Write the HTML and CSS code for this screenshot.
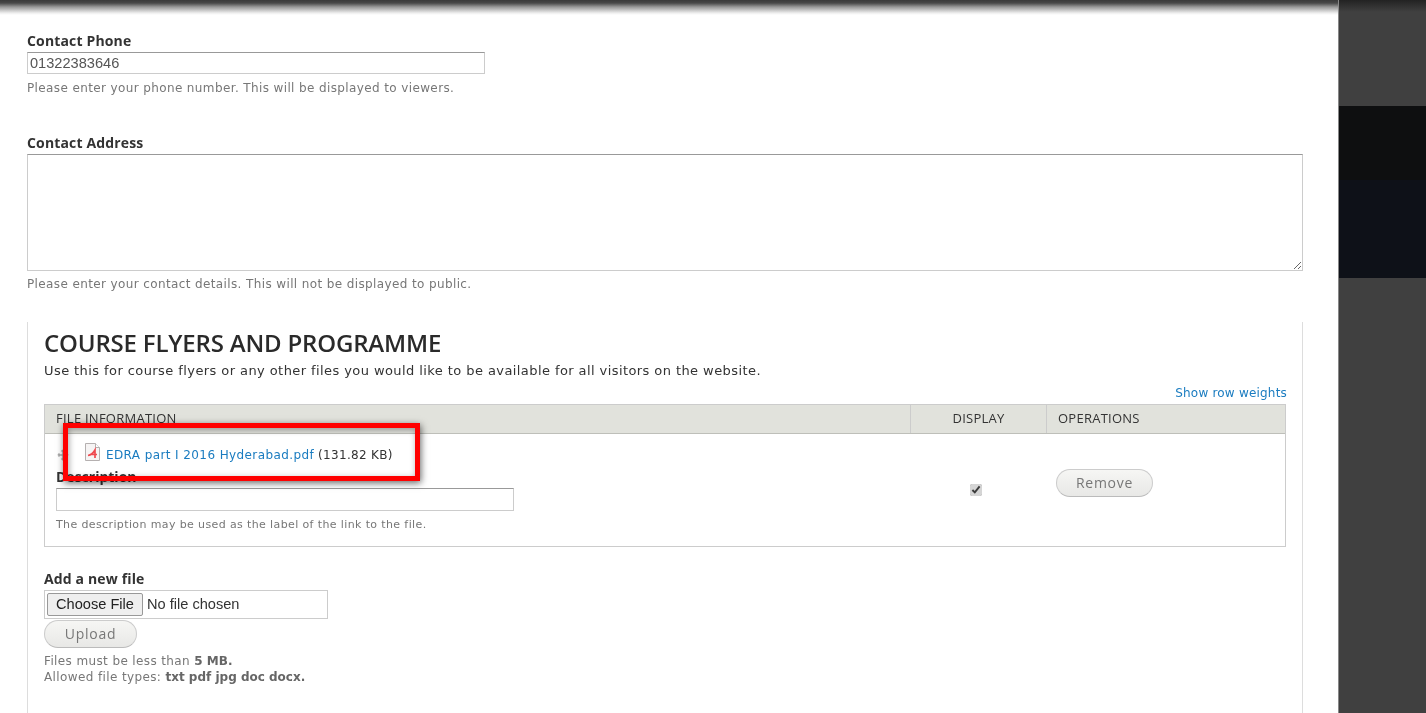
FILE: index.html
```html
<!DOCTYPE html>
<html lang="en">
<head>
<meta charset="utf-8">
<title>Course form</title>
<link rel="stylesheet" href="styles.css">
</head>
<body>
<div class="page">
  <main class="content">
    <div class="shade"></div>
    <form class="form">
      <div class="field field-phone">
        <label class="label">Contact Phone</label>
        <input class="text phone" type="text" value="01322383646">
        <div class="hint">Please enter your phone number. This will be displayed to viewers.</div>
      </div>
      <div class="field field-address">
        <label class="label">Contact Address</label>
        <textarea class="area"></textarea>
        <div class="hint">Please enter your contact details. This will not be displayed to public.</div>
      </div>
      <section class="fieldset">
        <h2 class="title">COURSE FLYERS AND PROGRAMME</h2>
        <p class="intro">Use this for course flyers or any other files you would like to be available for all visitors on the website.</p>
        <div class="weights"><a class="link" href="#">Show row weights</a></div>
        <div class="table">
          <div class="head">
            <div class="th th-file">FILE INFORMATION</div>
            <div class="th th-display">DISPLAY</div>
            <div class="th th-ops">OPERATIONS</div>
          </div>
          <div class="row">
            <div class="cell-file">
              <div class="file-line">
                <svg class="drag" width="14" height="14" viewBox="0 0 14 14"><path d="M7 2v10M2 7h10M7 2 5.500 3.500M7 2l1.500 1.500M7 12l-1.500-1.500M7 12l1.500-1.500M2 7l1.500-1.500M2 7l1.500 1.500M12 7l-1.500-1.500M12 7l-1.500 1.500" fill="none" stroke="#aaa" stroke-width="1.500"/></svg>
                <svg class="pdf" width="15" height="18" viewBox="0 0 15 18"><path d="M.5.5h10l4 4v13H.5z" fill="#f6f4f4" stroke="#b5b0b0"/><path d="M10.500.5v4h4" fill="#fff" stroke="#b5b0b0"/><path d="M3 12.500c3-.5 5-2 7-5.500v8M5.500 11.500H12" fill="none" stroke="#ee4a50" stroke-width="1.700"/></svg>
                <a class="link" href="#">EDRA part I 2016 Hyderabad.pdf</a>
                <span class="size">(131.82 KB)</span>
              </div>
              <label class="label desc-label">Description</label>
              <input class="text desc" type="text">
              <div class="hint small">The description may be used as the label of the link to the file.</div>
            </div>
            <div class="cell-display"><input class="check" type="checkbox" checked></div>
            <div class="cell-ops"><button class="btn remove" type="button">Remove</button></div>
          </div>
        </div>
        <div class="add">
          <label class="label">Add a new file</label>
          <div class="filebox"><button class="choose" type="button">Choose File</button><span class="nofile">No file chosen</span></div>
          <button class="btn upload" type="button">Upload</button>
          <div class="hint limits">Files must be less than <strong>5 MB.</strong><br>Allowed file types: <strong>txt pdf jpg doc docx.</strong></div>
        </div>
        <div class="highlight"></div>
      </section>
    </form>
  </main>
  <aside class="side">
    <div class="band band-a"></div>
    <div class="band band-b"></div>
    <div class="band band-c"></div>
    <div class="band band-d"></div>
  </aside>
</div>
</body>
</html>
```
FILE: styles.css
```css
* { box-sizing: border-box; }
html, body { margin: 0; height: 100%; overflow: hidden; background: #fff; }
body { font-family: "DejaVu Sans", sans-serif; font-size: 12px; color: #333; }
.page { display: flex; height: 713px; }
.content { width: 1338px; flex: none; position: relative; filter: blur(.4px); }
.shade { height: 15px; background: linear-gradient(#3a3a3a, #484848 3px, #999 7px, #eee 13px, #fff); }
.form { padding: 17px 36px 0 27px; }
.label { display: block; font-weight: 700; font-size: 14px; line-height: 17px; letter-spacing: .15px; color: #333; font-family: "Open Sans", sans-serif; }
.text { display: block; border: 1px solid #ccc; border-top-color: #999; padding: 0 2px; background: #fff; font: 14.6px/20px "Liberation Sans", sans-serif; color: #555; outline: 0; border-radius: 0; }
.phone { width: 458px; height: 22px; margin-top: 3px; }
.hint { font-size: 12px; line-height: 17px; letter-spacing: .38px; color: #777; }
.field-phone .hint { margin-top: 6px; }
.field-address { margin-top: 37px; }
.area { display: block; width: 1276px; height: 117px; margin: 3px 0 0; border: 1px solid #ccc; border-top-color: #999; outline: 0; background: #fff; resize: both; }
.field-address .hint { margin-top: 5px; }
.fieldset { position: relative; width: 1276px; height: 391px; margin-top: 29px; padding: 0 15px 0 16px; border: 1px solid #ddd; border-width: 0 1px; }
.title { margin: 0; padding-top: 5px; font: 600 24px/32px "Open Sans", sans-serif; color: #2a2a2a; letter-spacing: -.18px; }
.intro { margin: 3px 0 0; line-height: 17px; font-size: 13px; letter-spacing: .42px; color: #333; }
.weights { text-align: right; margin-top: 6px; line-height: 16px; letter-spacing: .2px; }
.link { color: #1a7cc0; text-decoration: none; }
.table { width: 1242px; height: 143px; margin-top: 3px; border: 1px solid #ccc; }
.head { display: flex; height: 29px; background: #e1e2dc; border-bottom: 1px solid #bebfb9; font: 13px/26px "Open Sans", sans-serif; letter-spacing: .25px; color: #333; }
.th { padding-left: 11px; }
.th-file { width: 865px; }
.th-display { width: 136px; padding: 0; text-align: center; border-left: 1px solid #ccc; }
.th-ops { border-left: 1px solid #ccc; }
.row { display: flex; }
.cell-file { width: 865px; padding: 10px 0 0 11px; }
.file-line { display: flex; align-items: center; height: 21px; letter-spacing: .4px; }
.drag { margin-right: 15px; margin-top: 1px; }
.pdf { margin-right: 6px; margin-top: -5px; }
.size { margin-left: 4px; color: #333; letter-spacing: .3px; }
.desc-label { margin-top: 3px; letter-spacing: 0; }
.desc { width: 458px; height: 23px; margin-top: 3px; }
.small { font-size: 11px; margin-top: 5px; }
.cell-display { width: 136px; display: flex; justify-content: center; align-items: flex-start; padding-top: 50px; }
.check { width: 12px; height: 12px; margin: 0 4px 0 0; accent-color: #d5d5d5; }
.cell-ops { padding: 35px 0 0 10px; }
.btn { display: block; border: 1px solid #ccc; border-bottom-color: #bbb; border-radius: 14px; background: linear-gradient(#f6f6f4, #e8e8e6); color: #777; font: 14px/18px "Open Sans", sans-serif; letter-spacing: .75px; padding: 0; text-align: center; }
.remove { width: 97px; height: 28px; }
.add { margin-top: 23px; }
.filebox { display: flex; align-items: center; width: 284px; height: 29px; margin-top: 3px; border: 1px solid #ccc; padding: 0 0 1px 2px; font: 14.6px "Liberation Sans", sans-serif; color: #333; }
.choose { width: 96px; height: 23px; margin-right: 4px; padding: 0; border: 1px solid #999; border-radius: 2px; background: #efefef; font: 14.6px "Liberation Sans", sans-serif; color: #222; }
.upload { width: 93px; height: 28px; margin-top: 1px; }
.limits { margin-top: 5px; line-height: 16px; }
.limits strong { color: #666; letter-spacing: 0; }
.highlight { position: absolute; left: 34.5px; top: 101px; width: 357px; height: 58px; border: 5px solid #f00; box-shadow: 1px 2px 7px rgba(0,0,0,.6), inset 1px 2px 6px rgba(0,0,0,.35); pointer-events: none; }
.side { width: 88px; flex: none; display: flex; flex-direction: column; border-left: 1px solid #888; }
.band { flex: none; }
.band-a { height: 106px; background: linear-gradient(#222, #404040 12px); }
.band-b { height: 74px; background: #0e0f10; }
.band-c { height: 98px; background: #0e1118; }
.band-d { flex: 1; background: #404040; }
```
